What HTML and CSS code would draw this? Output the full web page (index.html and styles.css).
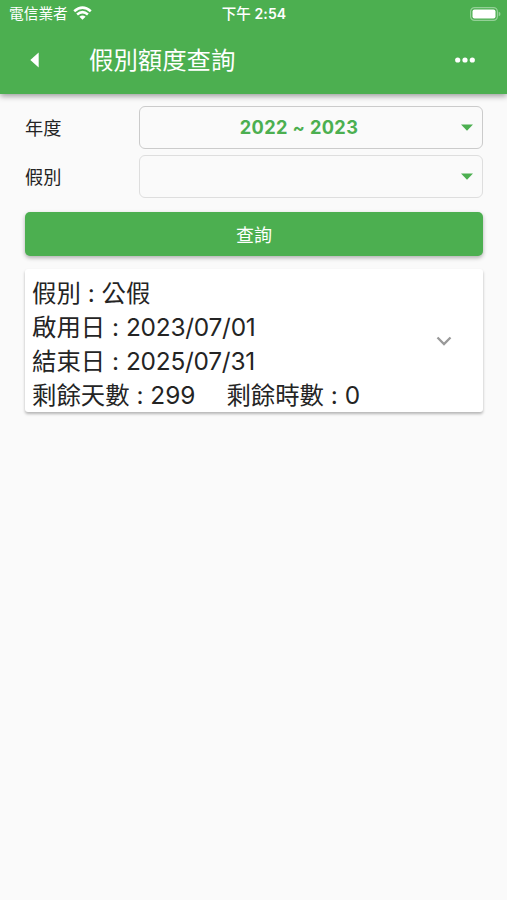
FILE: index.html
```html
<!DOCTYPE html>
<html lang="zh-Hant">
<head>
<meta charset="utf-8">
<meta name="viewport" content="width=device-width, initial-scale=1">
<title>假別額度查詢</title>
<link rel="stylesheet" href="styles.css">
</head>
<body>
<header class="header">
  <div class="status">
    <div class="carrier"><span>電信業者</span>
      <svg class="wifi" width="19" height="14" viewBox="0 0 19 14" fill="none" stroke="#fff" stroke-width="2.6"><path d="M1.2 5.2Q9.5-2 17.8 5.2M4.1 8.5Q9.5 3.9 14.9 8.5"/><path d="M6.4 10.8Q9.5 8.4 12.6 10.8L9.5 13.8Z" fill="#fff" stroke="none"/></svg>
    </div>
    <div class="time"><span class="period">下午</span> 2:54</div>
    <svg class="battery" width="31" height="14" viewBox="0 0 31 14"><rect x=".6" y=".6" width="26.8" height="12.8" rx="4" fill="none" stroke="#94d097" stroke-width="1.2"/><rect x="2.5" y="2.5" width="23" height="9" rx="2" fill="#fff"/><path d="M28.7 4.7Q30.5 5.3 30.5 7T28.7 9.3Z" fill="#94d097"/></svg>
  </div>
  <div class="bar">
    <svg class="back" width="9" height="16" viewBox="0 0 9 16"><path d="M8.7.6V15.4L.3 8Z" fill="#fff"/></svg>
    <h1 class="title">假別額度查詢</h1>
    <svg class="more" width="20" height="6" viewBox="0 0 20 6" fill="#fff"><circle cx="2.7" cy="3" r="2.6"/><circle cx="10" cy="3" r="2.6"/><circle cx="17.3" cy="3" r="2.6"/></svg>
  </div>
</header>
<main class="content">
  <div class="field">
    <span class="label">年度</span>
    <div class="select"><span class="value">2022 ~ 2023</span><svg class="caret" width="12" height="7" viewBox="0 0 12 7"><path d="M0 .5H12L6 6.8Z" fill="#4caf50"/></svg></div>
  </div>
  <div class="field">
    <span class="label">假別</span>
    <div class="select select-empty"><span class="value"></span><svg class="caret" width="12" height="7" viewBox="0 0 12 7"><path d="M0 .5H12L6 6.8Z" fill="#4caf50"/></svg></div>
  </div>
  <button class="submit">查詢</button>
  <section class="card">
    <div class="details">
      <div>假別 : 公假</div>
      <div>啟用日 : <span class="date">2023/07/01</span></div>
      <div>結束日 : <span class="date">2025/07/31</span></div>
      <div class="quota"><span>剩餘天數 : 299</span><span>剩餘時數 : 0</span></div>
    </div>
    <svg class="chevron" width="16" height="10" viewBox="0 0 16 10" fill="none" stroke="#999" stroke-width="2.3"><path d="M1.5 1.5L8 8L14.5 1.5"/></svg>
  </section>
</main>
</body>
</html>
```
FILE: styles.css
```css
* { box-sizing: border-box; }
body {
  margin: 0;
  min-height: 900px;
  background: #fafafa;
  color: #242424;
  font-family: Inter, "Noto Sans CJK TC", sans-serif;
}
.header {
  height: 94px;
  background: #4caf50;
  color: #fff;
  box-shadow: 0 2px 6px rgba(0, 0, 0, .4);
}
.status {
  display: grid;
  grid-template-columns: 1fr auto 1fr;
  align-items: center;
  height: 27px;
  padding: 0 6px 0 7px;
  font-size: 14px;
}
.carrier { display: flex; align-items: center; gap: 5px; padding-left: 2px; font-size: 14.7px; line-height: 26px; }
.wifi { margin-top: -1px; }
.time { font-weight: 600; line-height: 26px; letter-spacing: .1px; }
.period { font-size: 14.5px; font-weight: 500; }
.battery { justify-self: end; }
.bar {
  display: flex;
  align-items: center;
  height: 65px;
  padding: 0 32px 0 30px;
}
.title { margin: 0 auto 0 50px; font-size: 24.4px; font-weight: 400; line-height: 36px; }
.content { padding: 12px 24px 0 25px; }
.field {
  display: flex;
  align-items: center;
  height: 43px;
  margin-bottom: 6px;
}
.label { width: 114px; margin-top: -1px; font-size: 18.2px; }
.select {
  display: flex;
  flex: 1;
  align-items: center;
  height: 43px;
  padding: 0 9px 0 0;
  border: 1px solid #cbcbcb;
  border-radius: 6px;
}
.select-empty { border-color: #dedede; }
.value {
  flex: 1;
  margin-top: -1px;
  padding-right: 3px;
  color: #4caf50;
  font-size: 18.2px;
  font-weight: 650;
  letter-spacing: .36px;
  text-align: center;
}
.submit {
  display: block;
  width: 100%;
  height: 44px;
  margin: 13.5px 0 0;
  padding: 0;
  border: 0;
  border-radius: 5px;
  background: #4caf50;
  box-shadow: 0 2px 4px rgba(0, 0, 0, .3);
  color: #fff;
  font: inherit;
  font-size: 18px;
}
.card {
  display: flex;
  align-items: center;
  justify-content: space-between;
  height: 143px;
  margin-top: 13.5px;
  padding: 0 31px 0 7px;
  border-radius: 3px;
  background: #fff;
  box-shadow: 0 2px 3px rgba(0, 0, 0, .28);
}
.details {
  padding-top: 7px;
  font-size: 24.4px;
  font-feature-settings: "calt" 0;
  line-height: 34.2px;
  white-space: nowrap;
}
.date { letter-spacing: -.22px; }
.quota { display: flex; gap: 31px; }
```
